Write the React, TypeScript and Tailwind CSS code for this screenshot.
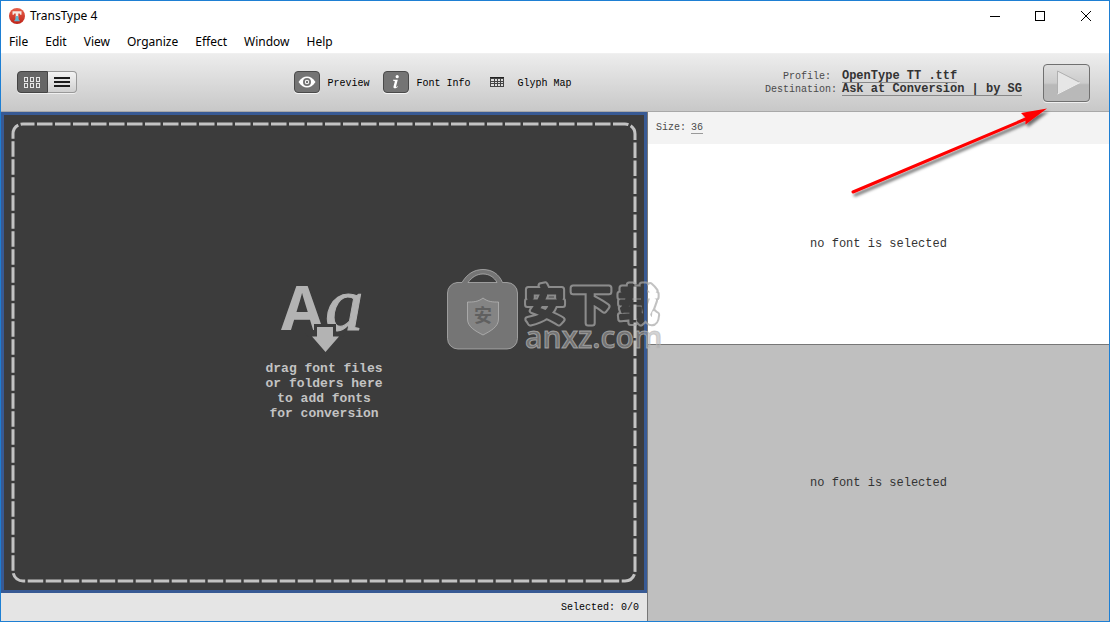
import type { ReactNode } from "react";

const mono = "font-['Liberation_Mono','Courier_New',monospace]";

const menuItems = ["File", "Edit", "View", "Organize", "Effect", "Window", "Help"];

function LogoIcon() {
  return (
    <svg viewBox="0 0 16 16" className="size-4" aria-hidden="true">
      <defs>
        <linearGradient id="logo-red" x1="0" y1="0" x2="0" y2="1">
          <stop offset="0" stopColor="#e8604a" />
          <stop offset="1" stopColor="#bf2419" />
        </linearGradient>
      </defs>
      <circle cx="8" cy="8" r="8" fill="url(#logo-red)" />
      <path d="M3.5 3.2h9v3.500h-1.300l-.5-1.300H9.300v4H6.700v-4H5.300L4.800 6.700H3.500z" fill="#f6e9e2" />
      <path d="M6.900 8h2.200l.9 4.200h.8v1H5.200v-1H6z" fill="#62b5cf" />
    </svg>
  );
}

function TitleBar() {
  return (
    <header className="flex h-[29px] items-center pl-2">
      <LogoIcon />
      <h1 className="ml-[5px] text-[12px] leading-4">TransType 4</h1>
      <div className="ml-auto flex h-full items-center">
        <button type="button" aria-label="Minimize" className="flex h-full w-11 items-center justify-center">
          <svg viewBox="0 0 10 10" className="size-[10px]" shapeRendering="crispEdges">
            <path d="M0 5h10v1H0z" />
          </svg>
        </button>
        <button type="button" aria-label="Maximize" className="flex h-full w-[46px] items-center justify-center">
          <svg viewBox="0 0 10 10" className="size-[10px]" fill="none" stroke="black" shapeRendering="crispEdges">
            <path d="M.5.5h9v9h-9z" />
          </svg>
        </button>
        <button type="button" aria-label="Close" className="flex h-full w-[46px] items-center justify-center">
          <svg viewBox="0 0 10 10" className="size-[10px]" fill="none" stroke="black">
            <path d="M0 0l10 10M10 0L0 10" />
          </svg>
        </button>
      </div>
    </header>
  );
}

function MenuBar() {
  return (
    <nav className="flex h-[24px] items-center gap-[17px] border-b border-[#f0f0f0] pl-2 text-[12px] leading-4">
      {menuItems.map((item) => (
        <button type="button" key={item}>
          {item}
        </button>
      ))}
    </nav>
  );
}

function PanelToggle({ label, active, children }: { label: string; active?: boolean; children: ReactNode }) {
  return (
    <button type="button" aria-pressed={!!active} className="flex items-center gap-[7px]">
      <span
        className={
          active
            ? "flex h-[22px] w-[26px] items-center justify-center rounded border border-[#4a4a4a] bg-[#747474] shadow-[0_1px_0_#f4f4f4]"
            : "flex h-[22px] w-[26px] items-center justify-center"
        }
      >
        {children}
      </span>
      <span className="pt-0.5">{label}</span>
    </button>
  );
}

function Toolbar() {
  return (
    <div
      className={`flex h-[58px] items-center border-b border-[#a8a8a8] bg-linear-to-b from-[#ededed] to-[#c8c8c8] pr-[19px] pl-4 text-[10px] leading-[13px] ${mono}`}
    >
      <div className="flex flex-[276_1_0%] pb-px">
        <div className="flex h-[22px] rounded shadow-[0_1px_0_#f0f0f0]">
          <button
            type="button"
            aria-label="Grid view"
            className="flex w-[31px] items-center justify-center rounded-l border border-[#444] bg-[#666]"
          >
            <svg viewBox="0 0 17 11" className="h-[11px] w-[17px]" fill="none" stroke="#e6e6e6" shapeRendering="crispEdges">
              <path d="M.5.5h3v4h-3zM6.500.5h3v4h-3zM12.500.5h3v4h-3zM.5 6.500h3v4h-3zM6.500 6.500h3v4h-3zM12.500 6.500h3v4h-3z" />
            </svg>
          </button>
          <button
            type="button"
            aria-label="List view"
            className="flex w-[29px] items-center justify-center rounded-r border border-l-0 border-[#999] bg-linear-to-b from-[#f4f4f4] to-[#d0d0d0]"
          >
            <svg viewBox="0 0 16 10" className="h-[10px] w-4" shapeRendering="crispEdges">
              <path d="M0 0h16v2H0zM0 4h16v2H0zM0 8h16v2H0z" fill="#1c1c1c" />
            </svg>
          </button>
        </div>
      </div>
      <div className="flex gap-3.5 pb-px">
        <PanelToggle label="Preview" active>
          <svg viewBox="0 0 18 12" className="h-3 w-[18px]">
            <path d="M.5 6C3 2 6 .5 9 .5S15 2 17.500 6C15 10 12 11.500 9 11.500S3 10 .5 6z" fill="white" />
            <circle cx="9" cy="6" r="3.100" fill="white" stroke="#747474" strokeWidth="1.800" />
            <circle cx="9" cy="6" r="1.200" fill="#747474" />
          </svg>
        </PanelToggle>
        <PanelToggle label="Font Info" active>
          <svg viewBox="0 0 8 14" className="h-[14px] w-2" fill="white">
            <circle cx="5.200" cy="1.700" r="1.600" />
            <path d="M1 4.800h4.800L4.100 11.200c-.2.9.3.9 1.500.1l.4.5C4.500 13.500 1.200 14.200 1.500 11.600L2.900 6.200 1 5.600z" />
          </svg>
        </PanelToggle>
        <PanelToggle label="Glyph Map">
          <svg viewBox="0 0 14 10" className="h-[10px] w-[14px]" shapeRendering="crispEdges">
            <path d="M0 0h14v10H0z" fill="#444" />
            <path d="M0 0h14v1H0z" fill="#222" />
            <path d="M1 2h3v2H1zM5 2h2v2H5zM8 2h2v2H8zM11 2h2v2h-2zM1 5h3v1H1zM5 5h2v1H5zM8 5h2v1H8zM11 5h2v1h-2zM1 7h3v2H1zM5 7h2v2H5zM8 7h2v2H8zM11 7h2v2h-2z" fill="#ddd" />
          </svg>
        </PanelToggle>
      </div>
      <div className="flex flex-[516_1_0%] items-center justify-end">
        <dl className="grid grid-cols-[auto_auto] items-center gap-x-[5px] pt-px text-[#4a4a4a]">
          <dt className="pr-[6px] text-right">Profile:</dt>
          <dd>
            <a
              href="#profile"
              className="block h-[13px] w-max border-b border-[#888] text-[12px] leading-[13px] font-bold text-[#333]"
            >
              OpenType TT .ttf
            </a>
          </dd>
          <dt>Destination:</dt>
          <dd>
            <a
              href="#destination"
              className="block h-[13px] w-max border-b border-[#888] text-[12px] leading-[13px] font-bold text-[#333]"
            >
              Ask at Conversion | by SG
            </a>
          </dd>
        </dl>
        <button
          type="button"
          aria-label="Convert"
          className="ml-[21px] flex h-[38px] w-[47px] items-center justify-center rounded border border-[#707070] bg-linear-to-b from-[#dedede] from-0% via-[#cbcbcb] via-50% to-[#b9b9b9] to-55% shadow-[0_1px_0_#f0f0f0]"
        >
          <svg viewBox="0 0 25 25" className="ml-1 size-[25px]">
            <path d="M1 1l23 11.500L1 24z" fill="#e6e6e6" />
            <path d="M1.500 24V1l22.500 11.500" fill="none" stroke="#b0b0b0" />
            <path d="M1.500 24L24 12.500" fill="none" stroke="#eee" />
          </svg>
        </button>
      </div>
    </div>
  );
}

function DropArt() {
  return (
    <svg viewBox="0 0 88 70" className="h-[70px] w-[88px] overflow-visible" fill="#b3b3b3" aria-hidden="true">
      <text x="1" y="45" fontSize="61" fontWeight="700" fontFamily="Open Sans, sans-serif">
        A
      </text>
      <text x="45" y="45" fontSize="77" fontStyle="italic" fontFamily="Liberation Serif, serif" stroke="#b3b3b3">
        a
      </text>
      <path d="M37 42h16v9.500h6L45.500 67 32 51.500h5z" stroke="#3c3c3c" strokeWidth="6" />
      <path d="M37 42h16v9.500h6L45.500 67 32 51.500h5z" />
    </svg>
  );
}

function DropZone() {
  return (
    <div className="relative flex flex-1 flex-col items-center justify-center border-[3px] border-[#385a94] bg-[#3c3c3c]">
      <svg className="absolute inset-0 size-full" aria-hidden="true">
        <rect
          x="9"
          y="9"
          rx="10"
          className="h-[calc(100%-18px)] w-[calc(100%-18px)]"
          fill="none"
          stroke="#c3c3c3"
          strokeWidth="3"
          strokeDasharray="15.500 2.500"
          strokeDashoffset="4"
        />
      </svg>
      <DropArt />
      <p className={`mt-1.5 text-center text-[13px] leading-[15px] font-bold text-[#c3c3c3] ${mono}`}>
        drag font files
        <br />
        or folders here
        <br />
        to add fonts
        <br />
        for conversion
      </p>
    </div>
  );
}

function Watermark() {
  return (
    <svg
      viewBox="0 0 220 92"
      className="pointer-events-none absolute top-[266px] left-[445px] h-[92px] w-[220px]"
      aria-hidden="true"
    >
      <defs>
        <mask id="hollow" maskUnits="userSpaceOnUse" x="70" y="0" width="150" height="84">
          <g fontFamily="Noto Sans CJK SC, sans-serif" fontSize="40" fontWeight="500" strokeLinejoin="round">
            <text x="79 125 172" y="52" fill="white" stroke="white" strokeWidth="7">
              安下载
            </text>
            <text x="79 125 172" y="52" fill="black" stroke="black" strokeWidth="3">
              安下载
            </text>
          </g>
        </mask>
      </defs>
      <g fill="#aaa" fillOpacity="0.52" stroke="#bbb" strokeOpacity="0.7">
        <path d="M11 15.500h5C21 7 28 2.500 37 2.500S53 7 56.500 15.500H61a10.500 10.500 0 0 1 10.500 10.500v45.500A10.500 10.500 0 0 1 61 82H12A10.500 10.500 0 0 1 1.500 71.500V26A10.500 10.500 0 0 1 11 15.500zM22 15.500h29C48 10 43 7 37 7s-11 3-15 8.500z" fillRule="evenodd" />
        <path d="M37 31c5 4 10 4 15.500 4v17c0 8-8 12-15.500 16-7.500-4-15.500-8-15.500-16V35c5.500 0 10.500 0 15.500-4z" fillOpacity="0.3" />
      </g>
      <text x="28" y="55" fontSize="18" fontWeight="700" fill="#606060" fontFamily="Noto Sans CJK SC, sans-serif">
        安
      </text>
      <rect x="70" width="150" height="84" fill="#aaa" fillOpacity="0.72" mask="url(#hollow)" />
      <text x="79" y="81" fontSize="30" fontWeight="600" fill="#aaa" fillOpacity="0.5" stroke="#bbb" strokeOpacity="0.7" fontFamily="Open Sans, sans-serif">
        anxz.com
      </text>
    </svg>
  );
}

function PointerArrow() {
  return (
    <svg
      viewBox="0 0 206 100"
      className="pointer-events-none absolute top-[103px] left-[845px] h-[100px] w-[206px]"
      aria-hidden="true"
    >
      <defs>
        <filter id="arrow-shadow" x="-10%" y="-10%" width="120%" height="130%">
          <feDropShadow dx="2" dy="3" stdDeviation="1.500" floodColor="#000" floodOpacity="0.55" />
        </filter>
      </defs>
      <g filter="url(#arrow-shadow)">
        <path d="M7 88L182 14" stroke="#f00" strokeWidth="3" strokeLinecap="round" />
        <path d="M201 4.500L175 9l4.500 4.500V20.500z" fill="#f00" />
      </g>
    </svg>
  );
}

export default function App() {
  return (
    <div className="relative flex min-h-screen flex-col border border-[#1e7fd3] bg-white font-['Noto_Sans','Segoe_UI',sans-serif] text-black">
      <TitleBar />
      <MenuBar />
      <Toolbar />
      <main className="flex flex-1">
        <section className="flex flex-[646_1_0%] flex-col">
          <DropZone />
          <footer className={`flex h-7 items-center justify-end bg-[#e5e5e5] pr-2 text-[10px] ${mono}`}>
            Selected: 0/0
          </footer>
        </section>
        <aside className={`flex flex-[461_1_0%] flex-col border-l border-[#777] text-[12px] text-[#333] ${mono}`}>
          <div className="flex h-8 items-center gap-[5px] bg-[#f3f3f3] pl-2 text-[10px] leading-3 text-[#4a4a4a]">
            Size:
            <button type="button" className="h-3 border-b border-[#999]">
              36
            </button>
          </div>
          <div className="flex flex-[200_1_0%] items-center justify-center bg-white">no font is selected</div>
          <div className="flex flex-[277_1_0%] items-center justify-center border-t border-[#777] bg-[#bfbfbf]">
            no font is selected
          </div>
        </aside>
      </main>
      <Watermark />
      <PointerArrow />
    </div>
  );
}
